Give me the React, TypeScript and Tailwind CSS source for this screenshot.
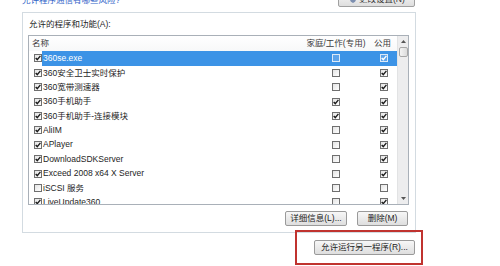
import React from "react";

type Row = { name: string; c: boolean; h: boolean; p: boolean };

const rows: Row[] = [
  { name: "360se.exe", c: true, h: false, p: true },
  { name: "360安全卫士实时保护", c: true, h: false, p: true },
  { name: "360宽带测速器", c: true, h: false, p: true },
  { name: "360手机助手", c: true, h: true, p: true },
  { name: "360手机助手-连接模块", c: true, h: true, p: true },
  { name: "AliIM", c: true, h: false, p: true },
  { name: "APlayer", c: true, h: false, p: true },
  { name: "DownloadSDKServer", c: true, h: false, p: true },
  { name: "Exceed 2008 x64 X Server", c: true, h: false, p: true },
  { name: "iSCSI 服务", c: false, h: false, p: false },
  { name: "LiveUpdate360", c: true, h: false, p: true },
];

function Box({ checked, light }: { checked: boolean; light?: boolean }) {
  return (
    <div
      className={`w-[8px] h-[8px] shrink-0 border flex items-center justify-center ${
        light ? "border-[#dce9f7] bg-[#5ea4ea]" : "border-[#6f6f6f] bg-gradient-to-br from-[#e4e4e4] to-white"
      }`}
    >
      {checked && (
        <svg width="6" height="6" viewBox="0 0 6 6">
          <path
            d="M0.7 2.9 L2.3 4.6 L5.4 0.9"
            stroke={light ? "#ffffff" : "#1c1c1c"}
            strokeWidth="1.4"
            fill="none"
          />
        </svg>
      )}
    </div>
  );
}

function Btn({ children, w }: { children: React.ReactNode; w: string }) {
  return (
    <div
      className={`${w} h-[15px] shrink-0 flex items-center justify-center rounded-[2px] border border-[#9a9a9a] bg-gradient-to-b from-[#f7f7f7] to-[#dedede] text-[8.5px] leading-none text-[#222] whitespace-nowrap`}
    >
      {children}
    </div>
  );
}

export default function App() {
  return (
    <div
      className="relative w-[500px] h-[266px] overflow-hidden bg-white text-[#1e1e1e]"
      style={{ fontFamily: '"Liberation Sans", "Noto Sans CJK SC", sans-serif' }}
    >
      {/* top strip */}
      <div className="h-[12px] flex items-start pl-[22px] pr-[85px]">
        <div className="-mt-[5px] text-[8.5px] leading-[10px] text-[#2f63c8] whitespace-nowrap">
          允许程序通信有哪些风险?
        </div>
        <div className="ml-auto -mt-[8px] w-[77px] h-[15px] rounded-[2px] border border-[#a0a0a0] bg-gradient-to-b from-[#f7f7f7] to-[#dedede] flex items-center pl-[11px] gap-[3px] text-[8.5px] leading-none text-[#333]">
          <svg width="6" height="7" viewBox="0 0 6 7">
            <path d="M3 0 L6 1 V3.5 Q6 6 3 7 Q0 6 0 3.5 V1 Z" fill="#7d8fb0" />
          </svg>
          <span>更改设置(N)</span>
        </div>
      </div>

      {/* group box */}
      <div className="ml-[22px] w-[394px] h-[221px] border border-[#d3dbe1] pl-[5px] flex flex-col">
        <div className="h-[22px] flex items-center pl-[1px] text-[8.5px] leading-none whitespace-nowrap">
          允许的程序和功能(A):
        </div>

        {/* list box */}
        <div className="w-[381px] h-[170px] border border-[#a9b0b8] flex overflow-hidden">
          <div className="flex-1 flex flex-col overflow-hidden">
            {/* header */}
            <div className="h-[15.2px] shrink-0 flex items-center text-[8.5px] leading-none text-[#3a3a3a] bg-gradient-to-b from-white to-[#f7f8f9]">
              <div className="flex-1 pl-[3px]">名称</div>
              <div className="w-[50px] flex justify-center whitespace-nowrap">家庭/工作(专用)</div>
              <div className="w-[36px] flex justify-end pr-[6px] whitespace-nowrap">公用</div>
            </div>
            {rows.map((r, i) => {
              const sel = i === 0;
              return (
                <div key={r.name} className="h-[14.4px] shrink-0 flex items-center text-[8.5px] leading-none">
                  <div className="pl-[5px] pr-0 flex items-center h-full">
                    <Box checked={r.c} />
                  </div>
                  <div className={`flex-1 h-full flex items-center ${sel ? "bg-[#3c93e6] text-white" : ""}`}>
                    <div className="flex-1 pl-[1px] whitespace-nowrap">{r.name}</div>
                    <div className="w-[50px] flex justify-center">
                      <Box checked={r.h} light={sel} />
                    </div>
                    <div className="w-[36px] flex justify-end pr-[9px]">
                      <Box checked={r.p} light={sel} />
                    </div>
                  </div>
                </div>
              );
            })}
          </div>
          {/* scrollbar */}
          <div className="w-[11px] h-full shrink-0 bg-[#ededee] border-l border-[#e2e3e4] flex flex-col items-center">
            <div className="h-[11px] w-full flex items-center justify-center">
              <svg width="5" height="3" viewBox="0 0 5 3">
                <path d="M0 3 L2.5 0 L5 3 Z" fill="#555" />
              </svg>
            </div>
            <div className="w-[9px] h-[10px] rounded-[2px] border border-[#a7a7a7] bg-gradient-to-r from-[#f4f4f4] to-[#dcdcdc]" />
            <div className="flex-1" />
            <div className="h-[11px] w-full flex items-center justify-center">
              <svg width="5" height="3" viewBox="0 0 5 3">
                <path d="M0 0 L2.5 3 L5 0 Z" fill="#555" />
              </svg>
            </div>
          </div>
        </div>

        {/* buttons row */}
        <div className="w-[381px] mt-[6px] flex justify-end gap-[10px] pr-[1px]">
          <Btn w="w-[62px]">详细信息(L)...</Btn>
          <Btn w="w-[51px]">删除(M)</Btn>
        </div>
      </div>

      {/* red annotation box */}
      <div className="absolute left-[295px] top-[230px] w-[128px] h-[35px] border-[2.5px] border-[#c0332f] flex items-center justify-end pr-[6px]">
        <Btn w="w-[101px]">允许运行另一程序(R)...</Btn>
      </div>
    </div>
  );
}
